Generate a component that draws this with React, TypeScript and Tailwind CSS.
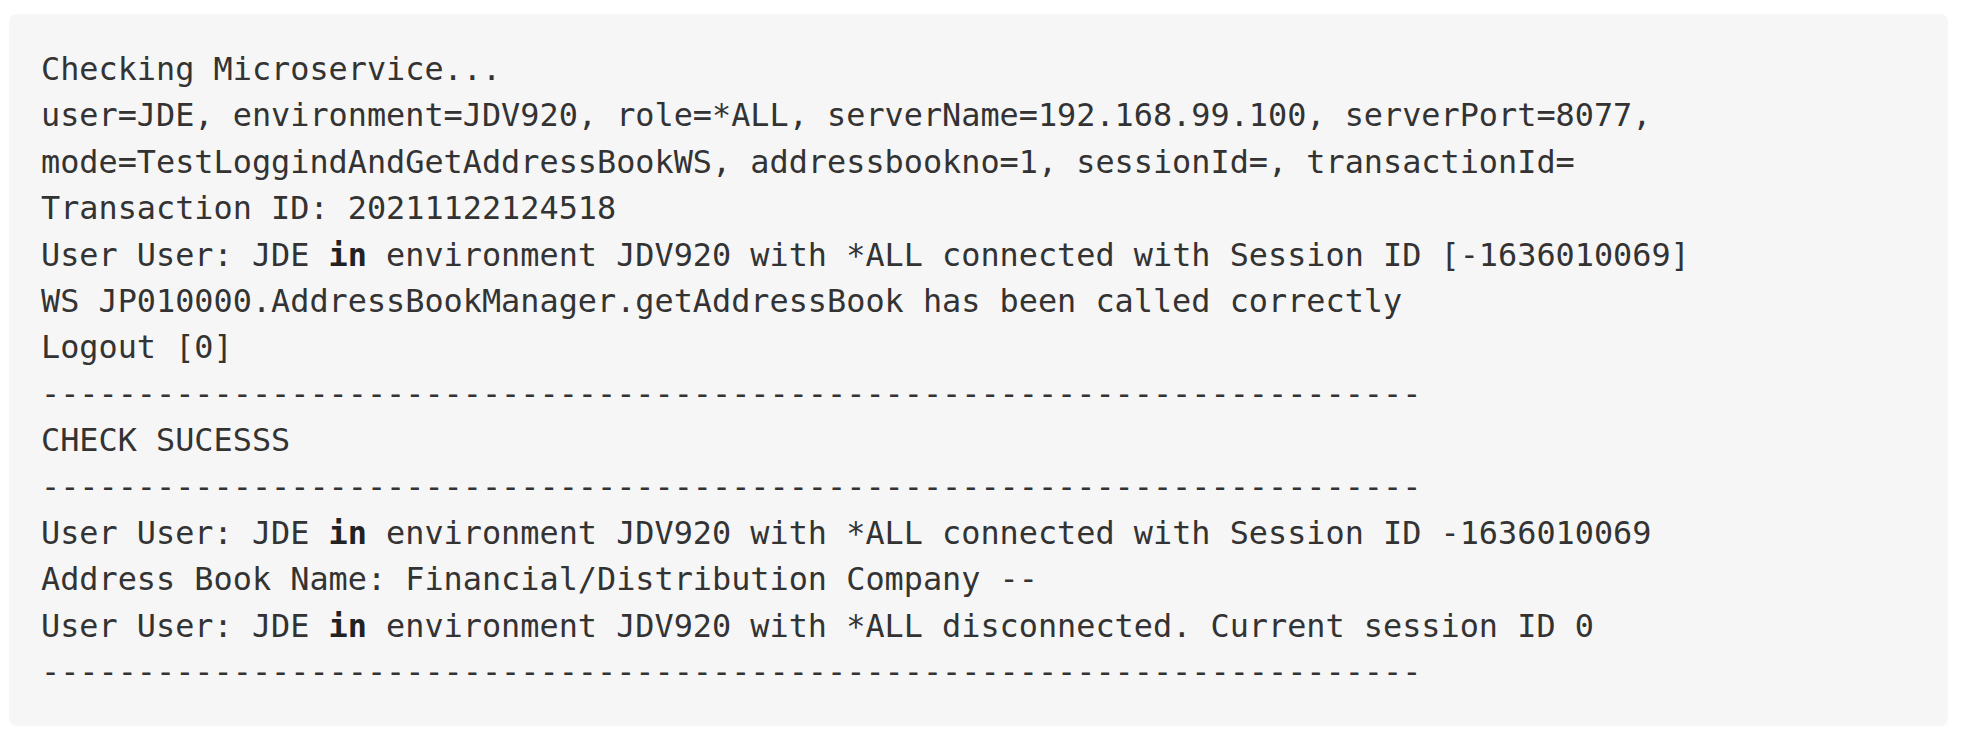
import React from "react";

const dash = "-".repeat(72);

function L({ children }: { children: React.ReactNode }) {
  return <div className="whitespace-pre">{children}</div>;
}

function Kw() {
  return <span className="font-bold text-[#222]">in</span>;
}

export default function App() {
  return (
    <div className="min-h-screen w-full bg-white pt-[14px] pl-[9px]">
      <div
        className="w-[1939px] rounded-[8px] bg-[#f6f6f6] px-[32px] pt-[32px] pb-[30px] text-[31.85px] leading-[46.4px] text-[#333333]"
        style={{ fontFamily: '"DejaVu Sans Mono", "Liberation Mono", monospace' }}
      >
        <L>Checking Microservice...</L>
        <L>user=JDE, environment=JDV920, role=*ALL, serverName=192.168.99.100, serverPort=8077,</L>
        <L>mode=TestLoggindAndGetAddressBookWS, addressbookno=1, sessionId=, transactionId=</L>
        <L>Transaction ID: 20211122124518</L>
        <L>
          User User: JDE <Kw /> environment JDV920 with *ALL connected with Session ID [-1636010069]
        </L>
        <L>WS JP010000.AddressBookManager.getAddressBook has been called correctly</L>
        <L>Logout [0]</L>
        <L>{dash}</L>
        <L>CHECK SUCESSS</L>
        <L>{dash}</L>
        <L>
          User User: JDE <Kw /> environment JDV920 with *ALL connected with Session ID -1636010069
        </L>
        <L>Address Book Name: Financial/Distribution Company --</L>
        <L>
          User User: JDE <Kw /> environment JDV920 with *ALL disconnected. Current session ID 0
        </L>
        <L>{dash}</L>
      </div>
    </div>
  );
}
